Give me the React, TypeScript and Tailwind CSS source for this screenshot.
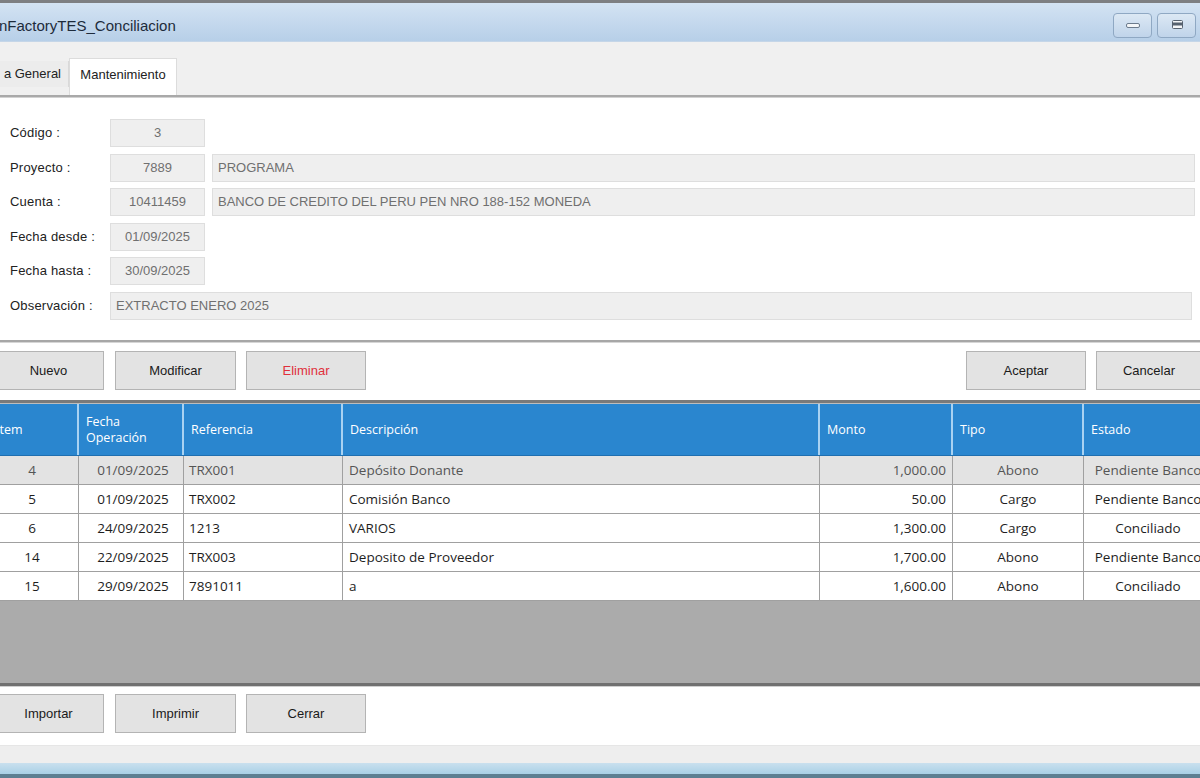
import React from 'react';

type Row = {
    item: string;
    fecha: string;
    ref: string;
    desc: string;
    monto: string;
    tipo: string;
    estado: string;
};

const rows: Row[] = [
    { item: '4', fecha: '01/09/2025', ref: 'TRX001', desc: 'Depósito Donante', monto: '1,000.00', tipo: 'Abono', estado: 'Pendiente Banco' },
    { item: '5', fecha: '01/09/2025', ref: 'TRX002', desc: 'Comisión Banco', monto: '50.00', tipo: 'Cargo', estado: 'Pendiente Banco' },
    { item: '6', fecha: '24/09/2025', ref: '1213', desc: 'VARIOS', monto: '1,300.00', tipo: 'Cargo', estado: 'Conciliado' },
    { item: '14', fecha: '22/09/2025', ref: 'TRX003', desc: 'Deposito de Proveedor', monto: '1,700.00', tipo: 'Abono', estado: 'Pendiente Banco' },
    { item: '15', fecha: '29/09/2025', ref: '7891011', desc: 'a', monto: '1,600.00', tipo: 'Abono', estado: 'Conciliado' },
];

// column widths, first one starts under the left crop
const cols = ['w-[79px]', 'w-[105px]', 'w-[159px]', 'w-[477px]', 'w-[133px]', 'w-[131px]', 'w-[128px]'];

const WinButton = ({ label, danger, className = '' }: { label: string; danger?: boolean; className?: string }) => (
    <button
        className={`h-[39px] shrink-0 border border-[#b4b4b4] bg-[#e3e3e3] text-[13px] ${danger ? 'text-[#e0303c]' : 'text-[#1a1a1a]'} ${className}`}
    >
        {label}
    </button>
);

const Field = ({ value, center, className = '' }: { value: string; center?: boolean; className?: string }) => (
    <div
        className={`h-[28px] border border-[#dedede] bg-[#efefef] flex items-center text-[13px] text-[#707070] ${center ? 'justify-center' : 'pl-[5px]'} ${className}`}
    >
        {value}
    </div>
);

const FormRow = ({ label, children }: { label: string; children: React.ReactNode }) => (
    <div className="flex items-center h-[28px]">
        <div className="w-[100px] text-[13px] text-[#222] tracking-[0.2px]">{label}</div>
        {children}
    </div>
);

export default function App() {
    return (
        <div className="w-[1200px] h-[778px] overflow-hidden bg-white flex flex-col" style={{ fontFamily: '"Liberation Sans", Arial, sans-serif' }}>
            {/* window frame top */}
            <div className="h-[3px] bg-[#7d7f82] shrink-0" />

            {/* title bar */}
            <div className="h-[39px] shrink-0 bg-gradient-to-b from-[#d3e3f3] to-[#b7cfe8] flex items-center border-b border-[#c5d6e8]">
                <span className="text-[15px] text-[#1d2b3b] -ml-[1px] mt-[8px]">nFactoryTES_Conciliacion</span>
                <div className="ml-auto mr-[4px] flex gap-[5px] mt-[6px]">
                    <div className="w-[39px] h-[25px] rounded-[4px] border border-[#8fa8c3] bg-gradient-to-b from-[#dce8f4] to-[#c0d4ea] flex items-center justify-center">
                        <div className="w-[14px] h-[5px] rounded-[2px] bg-[#f4f6f8] border border-[#6c7b8c]" />
                    </div>
                    <div className="w-[39px] h-[25px] rounded-[4px] border border-[#8fa8c3] bg-gradient-to-b from-[#dce8f4] to-[#c0d4ea] flex items-center justify-center">
                        <svg width="16" height="12" viewBox="0 0 16 12">
                            <rect x="3.5" y="1.5" width="10" height="8" rx="1" fill="#f4f6f8" stroke="#55616f" />
                            <rect x="3.5" y="3.5" width="10" height="3" fill="#55616f" />
                        </svg>
                    </div>
                </div>
            </div>

            {/* tab strip */}
            <div className="h-[53px] shrink-0 bg-[#f0f0f0] flex items-end">
                <div className="flex items-end h-full w-full">
                    <div className="mb-[8px] h-[26px] w-[69px] border-r border-[#d9d9d9] bg-[#ececec] flex items-center justify-end pr-[7px] text-[13px] text-[#222]">
                        a General
                    </div>
                    <div className="h-[37px] w-[108px] bg-white border-x border-t border-[#dcdcdc] flex items-start justify-center pt-[6px] text-[13px] text-[#222]">
                        Mantenimiento
                    </div>
                </div>
            </div>
            <div className="h-[3px] shrink-0 bg-[#a9a9a9] border-b border-[#d2d2d2]" />

            {/* header form */}
            <div className="h-[242px] shrink-0 pt-[21px] pl-[10px] flex flex-col gap-[6.5px]">
                <FormRow label="Código :">
                    <Field value="3" center className="w-[95px]" />
                </FormRow>
                <FormRow label="Proyecto :">
                    <Field value="7889" center className="w-[95px]" />
                    <Field value="PROGRAMA" className="w-[983px] ml-[7px]" />
                </FormRow>
                <FormRow label="Cuenta :">
                    <Field value="10411459" center className="w-[95px]" />
                    <Field value="BANCO DE CREDITO DEL PERU PEN NRO 188-152 MONEDA" className="w-[983px] ml-[7px]" />
                </FormRow>
                <FormRow label="Fecha desde :">
                    <Field value="01/09/2025" center className="w-[95px]" />
                </FormRow>
                <FormRow label="Fecha hasta :">
                    <Field value="30/09/2025" center className="w-[95px]" />
                </FormRow>
                <FormRow label="Observación :">
                    <Field value="EXTRACTO ENERO 2025" className="w-[1082px]" />
                </FormRow>
            </div>
            <div className="h-[3px] shrink-0 bg-[#a7a7a7] border-b border-[#d6d6d6]" />

            {/* action buttons */}
            <div className="h-[57px] shrink-0 flex items-start pt-[8px]">
                <WinButton label="Nuevo" className="w-[121px] -ml-[17px] pl-[10px]" />
                <WinButton label="Modificar" className="w-[121px] ml-[11px]" />
                <WinButton label="Eliminar" danger className="w-[120px] ml-[10px]" />
                <WinButton label="Aceptar" className="w-[120px] ml-auto" />
                <WinButton label="Cancelar" className="w-[120px] ml-[10px] -mr-[16px] pr-[14px]" />
            </div>
            <div className="h-[4px] shrink-0 bg-[#7a7a7a] border-b border-[#bdbdbd]" />

            {/* grid */}
            <div className="flex-1 bg-[#ababab] flex flex-col overflow-hidden" style={{ fontFamily: '"Open Sans", "Noto Sans", sans-serif' }}>
                <div className="flex h-[52px] shrink-0 bg-[#2a86cf] text-white text-[12.5px] leading-[16px] border-b border-[#1f6fb0]">
                    <div className={`${cols[0]} shrink-0 flex items-center border-r-2 border-[#a9d2f2]`}>
                        <span className="-ml-[4px]">Item</span>
                    </div>
                    <div className={`${cols[1]} shrink-0 flex items-center pl-[7px] border-r-2 border-[#a9d2f2]`}>Fecha<br />Operación</div>
                    <div className={`${cols[2]} shrink-0 flex items-center pl-[7px] border-r-2 border-[#a9d2f2]`}>Referencia</div>
                    <div className={`${cols[3]} shrink-0 flex items-center pl-[7px] border-r-2 border-[#a9d2f2]`}>Descripción</div>
                    <div className={`${cols[4]} shrink-0 flex items-center pl-[7px] border-r-2 border-[#a9d2f2]`}>Monto</div>
                    <div className={`${cols[5]} shrink-0 flex items-center pl-[7px] border-r-2 border-[#a9d2f2]`}>Tipo</div>
                    <div className={`${cols[6]} shrink-0 flex items-center pl-[7px]`}>Estado</div>
                </div>
                {rows.map((r, i) => (
                    <div
                        key={r.item}
                        className={`flex h-[29px] shrink-0 text-[13.5px] border-b border-[#a0a0a0] ${i === 0 ? 'bg-[#e3e3e3] text-[#555]' : 'bg-white text-[#1e1e1e]'}`}
                    >
                        <div className={`${cols[0]} shrink-0 flex items-center justify-center pr-[14px] border-r border-[#a0a0a0]`}>{r.item}</div>
                        <div className={`${cols[1]} shrink-0 flex items-center justify-center pl-[4px] border-r border-[#a0a0a0]`}>{r.fecha}</div>
                        <div className={`${cols[2]} shrink-0 flex items-center pl-[5px] border-r border-[#a0a0a0]`}>{r.ref}</div>
                        <div className={`${cols[3]} shrink-0 flex items-center pl-[6px] border-r border-[#a0a0a0]`}>{r.desc}</div>
                        <div className={`${cols[4]} shrink-0 flex items-center justify-end pr-[6px] border-r border-[#a0a0a0]`}>{r.monto}</div>
                        <div className={`${cols[5]} shrink-0 flex items-center justify-center border-r border-[#a0a0a0]`}>{r.tipo}</div>
                        <div className={`${cols[6]} shrink-0 flex items-center justify-center whitespace-nowrap`}>{r.estado}</div>
                    </div>
                ))}
            </div>
            <div className="h-[4px] shrink-0 bg-[#707070] border-b border-[#cfcfcf]" />

            {/* bottom buttons */}
            <div className="h-[58px] shrink-0 flex items-start pt-[7px]">
                <WinButton label="Importar" className="w-[121px] -ml-[17px] pl-[10px]" />
                <WinButton label="Imprimir" className="w-[121px] ml-[11px]" />
                <WinButton label="Cerrar" className="w-[120px] ml-[10px]" />
            </div>

            {/* status strip + taskbar edge */}
            <div className="h-[18px] shrink-0 bg-[#eeeeee] border-t border-[#e6e6e6]" />
            <div className="h-[15px] shrink-0 bg-gradient-to-b from-[#c9e0ee] to-[#a9d0e6] border-b-[4px] border-[#5d7f92]" />
        </div>
    );
}
